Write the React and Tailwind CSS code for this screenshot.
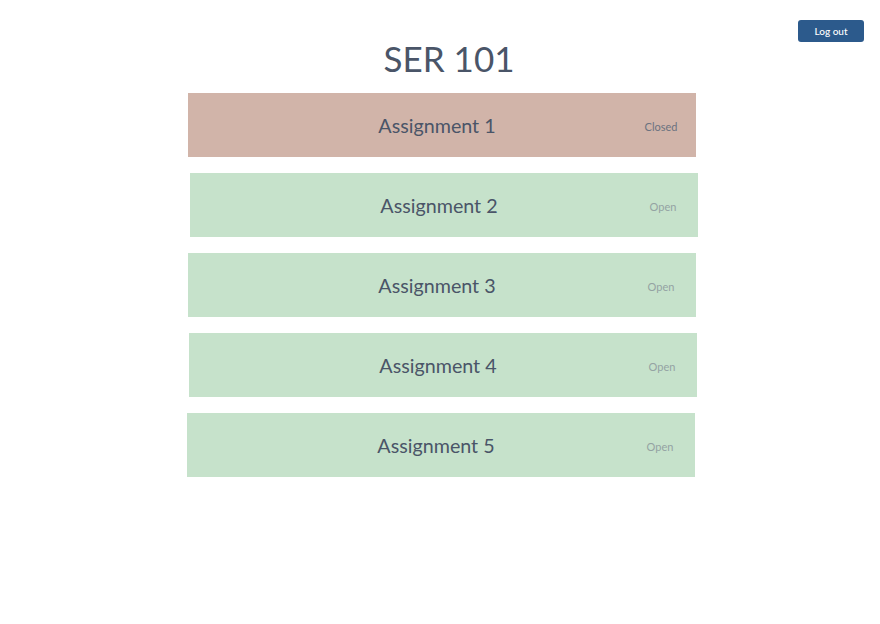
export default function App() {
  const items = [
    { name: "Assignment 1", status: "Closed", shift: "translate-x-[2px]" },
    { name: "Assignment 2", status: "Open", shift: "translate-x-[4px]" },
    { name: "Assignment 3", status: "Open", shift: "translate-x-[2px]" },
    { name: "Assignment 4", status: "Open", shift: "translate-x-[3px]" },
    { name: "Assignment 5", status: "Open", shift: "translate-x-[1px]" },
  ];
  return (
    <div className="min-h-screen w-full bg-white font-['Lato',sans-serif] text-[#4a5568]">
      <div className="relative">
        <button className="absolute right-4 top-5 h-[22px] w-[66px] rounded-[3px] bg-[#2c5a8c] text-[10px] font-medium text-white">
          Log out
        </button>
        <h1 className="pt-[38px] pl-[18px] text-center text-[35px] leading-[40px]">SER 101</h1>
      </div>
      <div className="mx-auto mt-[15px] flex w-[508px] flex-col gap-4">
        {items.map((it) => (
          <div
            key={it.name}
            className={
              "flex h-16 items-center pl-[50px] pr-[10px] " +
              it.shift +
              " " +
              (it.status === "Closed" ? "bg-[#d1b4a9]" : "bg-[#c6e2cb]")
            }
          >
            <div className="mt-[2px] flex-1 text-center text-[19.7px] leading-7">{it.name}</div>
            <div
              className={
                "mt-[4px] w-[50px] text-center text-[11px] " +
                (it.status === "Closed" ? "text-[#6b7280]" : "text-[#94a3a3]")
              }
            >
              {it.status}
            </div>
          </div>
        ))}
      </div>
    </div>
  );
}
